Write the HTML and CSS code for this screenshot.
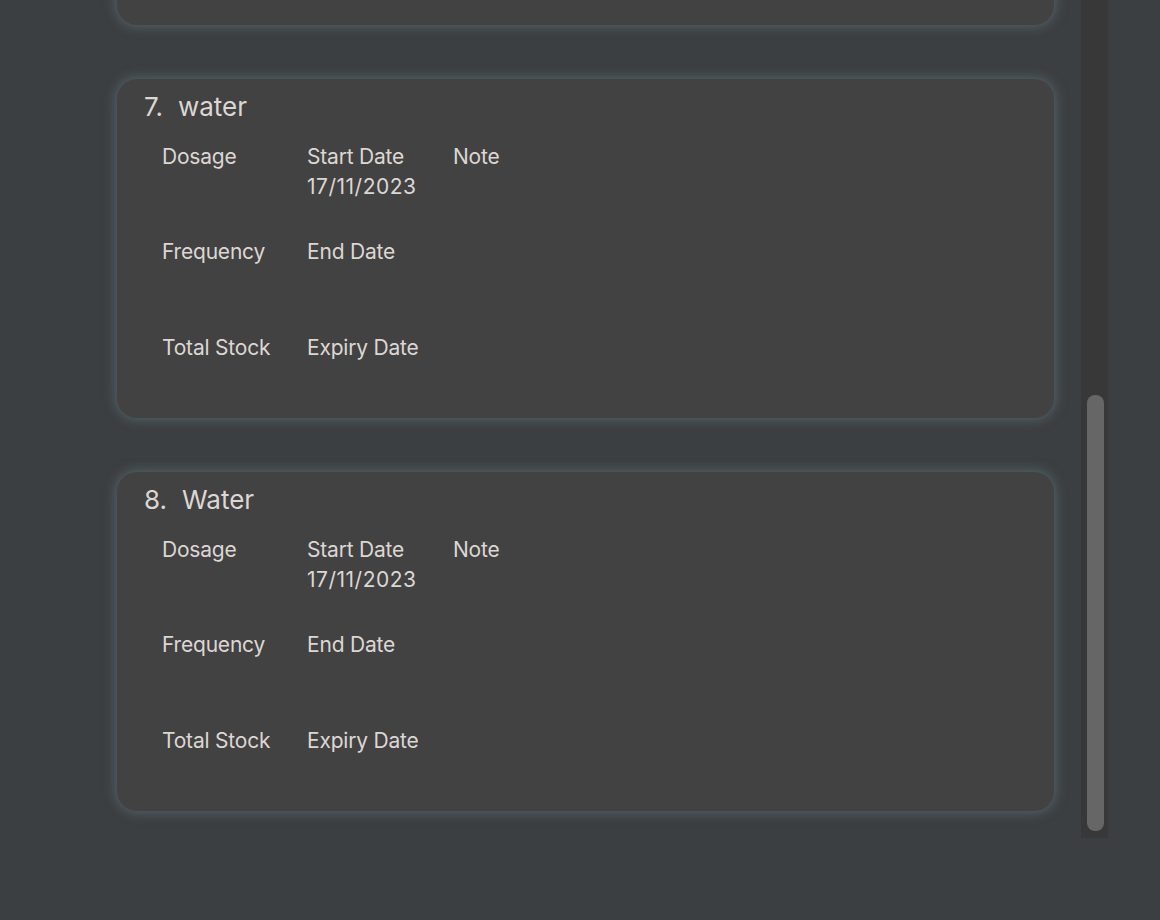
FILE: index.html
```html
<!DOCTYPE html>
<html>
<head>
<meta charset="utf-8">
<link rel="stylesheet" href="styles.css">
</head>
<body>
<div class="app">
  <div class="viewport">
    <div class="list">
      <div class="card"></div>
      <div class="card">
        <div class="title"><span class="num">7.</span><span class="name">water</span></div>
        <div class="grid">
          <div class="cell"><div>Dosage</div></div>
          <div class="cell"><div>Start Date</div><div class="date">17/11/2023</div></div>
          <div class="cell"><div>Note</div></div>
          <div class="cell"><div>Frequency</div></div>
          <div class="cell"><div>End Date</div></div>
          <div class="cell"></div>
          <div class="cell"><div>Total Stock</div></div>
          <div class="cell"><div>Expiry Date</div></div>
          <div class="cell"></div>
        </div>
      </div>
      <div class="card">
        <div class="title"><span class="num">8.</span><span class="name">Water</span></div>
        <div class="grid">
          <div class="cell"><div>Dosage</div></div>
          <div class="cell"><div>Start Date</div><div class="date">17/11/2023</div></div>
          <div class="cell"><div>Note</div></div>
          <div class="cell"><div>Frequency</div></div>
          <div class="cell"><div>End Date</div></div>
          <div class="cell"></div>
          <div class="cell"><div>Total Stock</div></div>
          <div class="cell"><div>Expiry Date</div></div>
          <div class="cell"></div>
        </div>
      </div>
    </div>
  </div>
  <div class="scrolltrack"><div class="thumb"></div></div>
</div>
</body>
</html>
```
FILE: styles.css
```css
html, body {
  margin: 0;
  padding: 0;
  background: #3c3f42;
  width: 1160px;
  height: 920px;
  overflow: hidden;
  font-family: Inter, "Noto Sans", sans-serif;
  color: #dcd7d3;
}
.app {
  display: flex;
  align-items: flex-start;
}
.viewport {
  width: 1081px;
  height: 838px;
  overflow: hidden;
}
.list {
  margin-top: -314px;
  padding-left: 117px;
  display: flex;
  flex-direction: column;
  gap: 54px;
}
.card {
  width: 937px;
  height: 339px;
  box-sizing: border-box;
  background: #424242;
  border-radius: 20px;
  box-shadow: 0 0 12px 1px rgba(100, 128, 136, 0.62);
  padding: 12px 0 0 27px;
}
.title {
  font-size: 26px;
  line-height: 32px;
  display: flex;
  gap: 15px;
}
.grid {
  margin-top: 19px;
  margin-left: 18px;
  display: grid;
  grid-template-columns: 145px 146px 146px;
  grid-template-rows: 95px 96px auto;
  font-size: 21px;
  line-height: 30px;
  letter-spacing: -0.2px;
}
.date {
  letter-spacing: 0.5px;
}
.scrolltrack {
  width: 27px;
  height: 838px;
  background: #383838;
  box-sizing: border-box;
  padding: 395px 4px 7px 6px;
}
.thumb {
  height: 100%;
  background: #666666;
  border-radius: 8px;
}
```
